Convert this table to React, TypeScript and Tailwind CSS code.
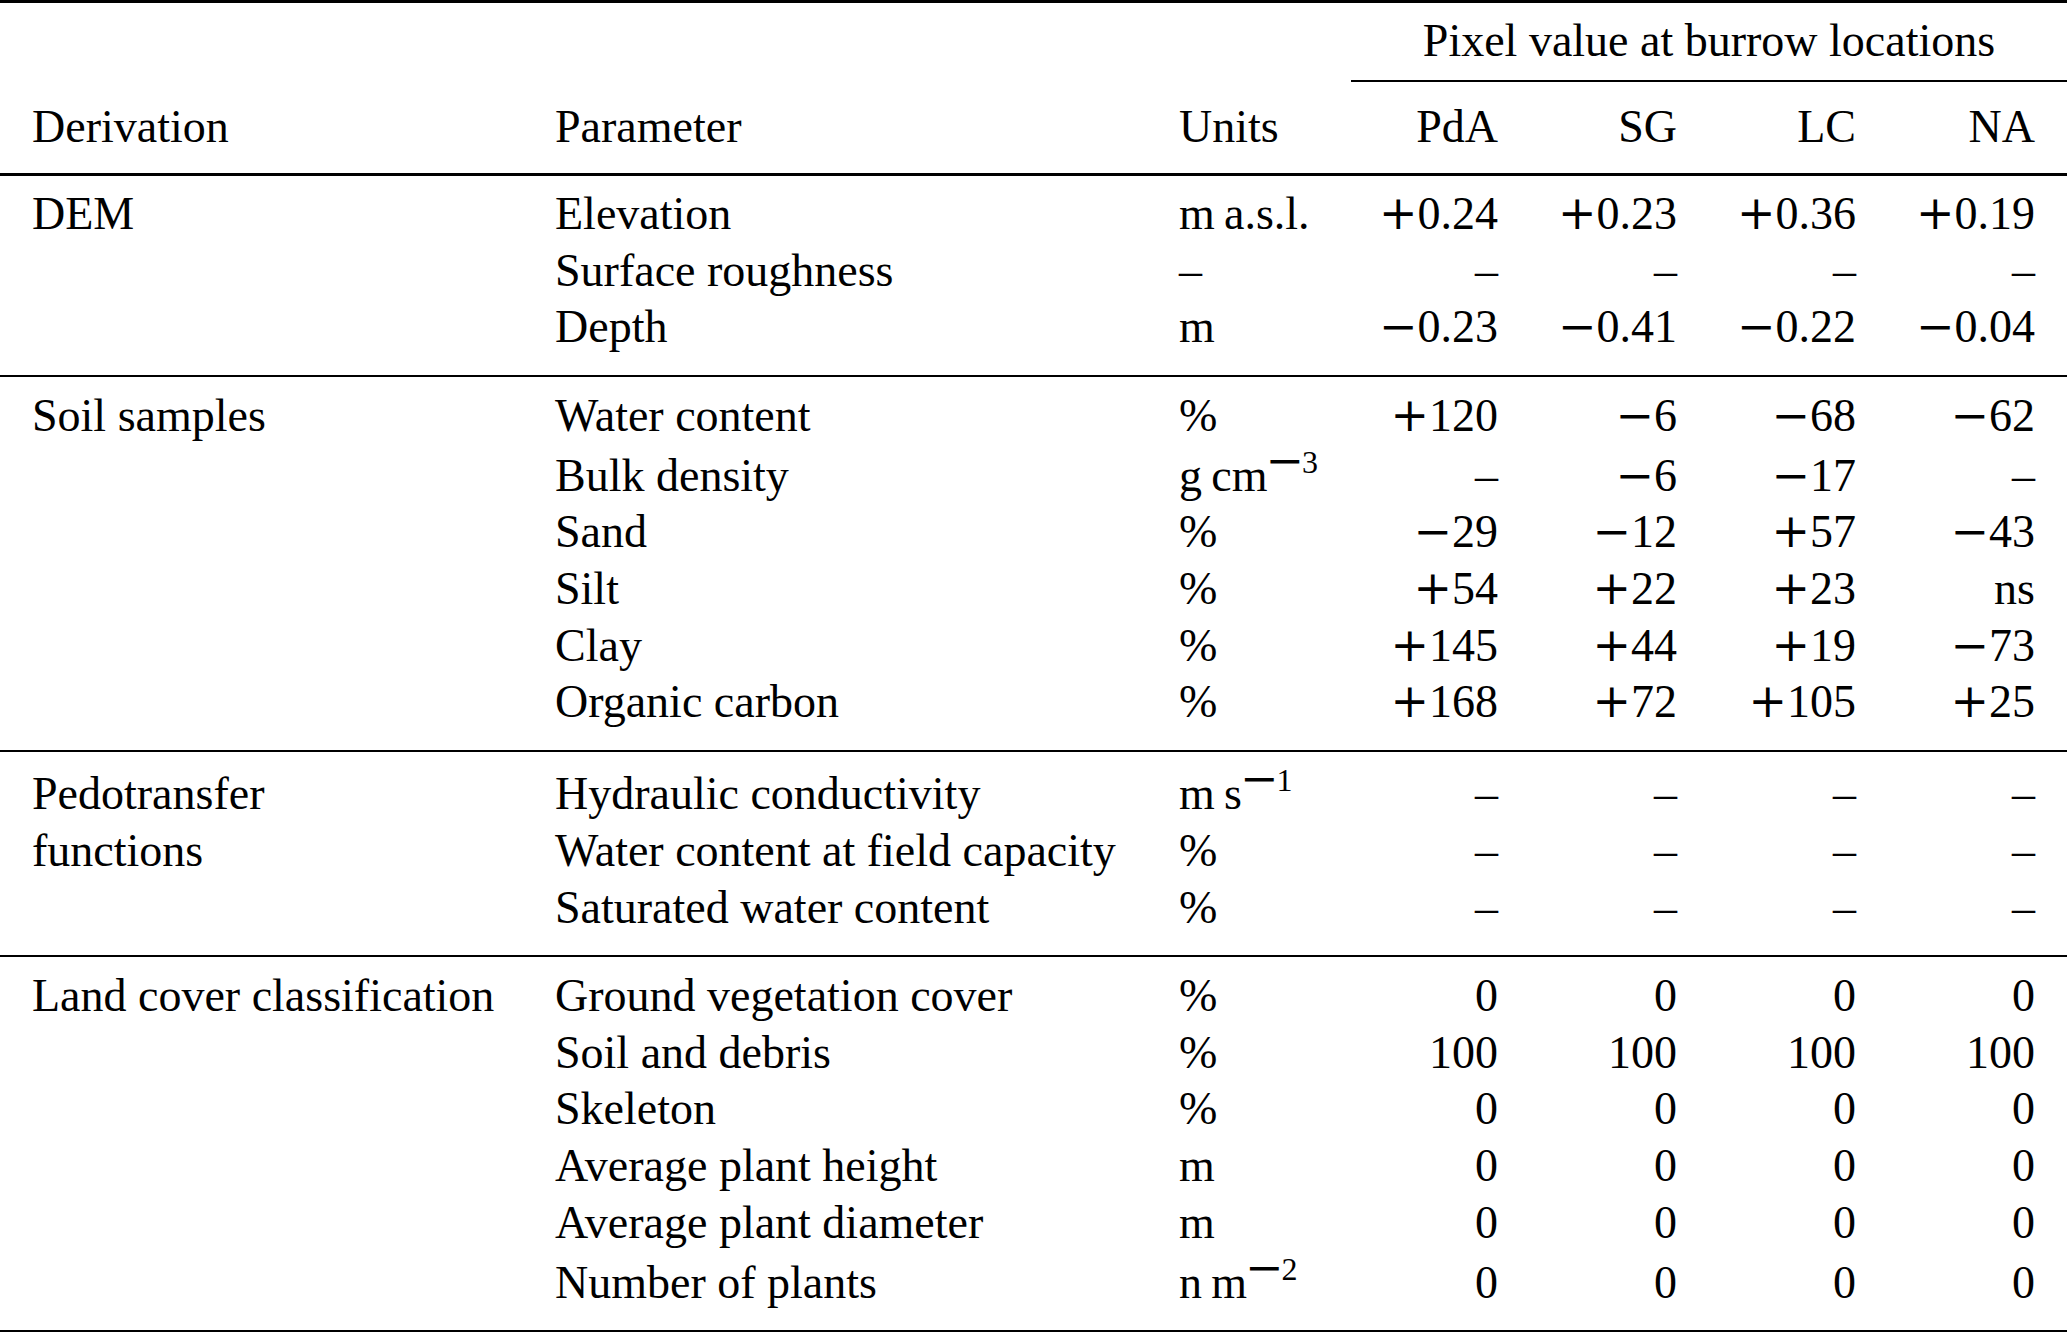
import React from "react";

const COLS =
  "grid grid-cols-[523px_624px_172px_147px_179px_179px_179px] pl-[32px] pr-[32px]";

function Sign({ c }: { c: string }) {
  return <span className="font-['DejaVu_Serif',serif] leading-none">{c}</span>;
}

function Num({ v }: { v: string }) {
  if (v.startsWith("+") || v.startsWith("−")) {
    return (
      <>
        <Sign c={v[0]} />
        {v.slice(1)}
      </>
    );
  }
  return <>{v}</>;
}

function Sup({ n }: { n: string }) {
  return (
    <span className="relative top-[-18px] text-[32px] leading-none">
      <span className="relative top-[3px] ml-[-2px] mr-[-2px] font-['DejaVu_Serif',serif] text-[46px] leading-none">
        −
      </span>
      {n}
    </span>
  );
}

type Row = { p: string; u: React.ReactNode; v: string[]; sup?: boolean };
type Section = { name: string[]; rows: Row[] };

const D = "–";

const sections: Section[] = [
  {
    name: ["DEM"],
    rows: [
      { p: "Elevation", u: "m\u2009a.s.l.", v: ["+0.24", "+0.23", "+0.36", "+0.19"] },
      { p: "Surface roughness", u: D, v: [D, D, D, D] },
      { p: "Depth", u: "m", v: ["−0.23", "−0.41", "−0.22", "−0.04"] },
    ],
  },
  {
    name: ["Soil samples"],
    rows: [
      { p: "Water content", u: "%", v: ["+120", "−6", "−68", "−62"] },
      {
        p: "Bulk density",
        u: (
          <>
            g{"\u2009"}cm
            <Sup n="3" />
          </>
        ),
        v: [D, "−6", "−17", D],
        sup: true,
      },
      { p: "Sand", u: "%", v: ["−29", "−12", "+57", "−43"] },
      { p: "Silt", u: "%", v: ["+54", "+22", "+23", "ns"] },
      { p: "Clay", u: "%", v: ["+145", "+44", "+19", "−73"] },
      { p: "Organic carbon", u: "%", v: ["+168", "+72", "+105", "+25"] },
    ],
  },
  {
    name: ["Pedotransfer", "functions"],
    rows: [
      {
        p: "Hydraulic conductivity",
        u: (
          <>
            m{"\u2009"}s
            <Sup n="1" />
          </>
        ),
        v: [D, D, D, D],
        sup: true,
      },
      { p: "Water content at field capacity", u: "%", v: [D, D, D, D] },
      { p: "Saturated water content", u: "%", v: [D, D, D, D] },
    ],
  },
  {
    name: ["Land cover classification"],
    rows: [
      { p: "Ground vegetation cover", u: "%", v: ["0", "0", "0", "0"] },
      { p: "Soil and debris", u: "%", v: ["100", "100", "100", "100"] },
      { p: "Skeleton", u: "%", v: ["0", "0", "0", "0"] },
      { p: "Average plant height", u: "m", v: ["0", "0", "0", "0"] },
      { p: "Average plant diameter", u: "m", v: ["0", "0", "0", "0"] },
      {
        p: "Number of plants",
        u: (
          <>
            n{"\u2009"}m
            <Sup n="2" />
          </>
        ),
        v: ["0", "0", "0", "0"],
        sup: true,
      },
    ],
  },
];

function SectionBlock({ s }: { s: Section }) {
  return (
    <div className="pt-[10.5px] pb-[18.9px]">
      {s.rows.map((r, i) => (
        <div key={i} className={COLS + (r.sup ? " pt-[3.3px]" : "")}>
          <div className="whitespace-nowrap">{s.name[i] ?? ""}</div>
          <div className="whitespace-nowrap">{r.p}</div>
          <div className="whitespace-nowrap">{r.u}</div>
          {r.v.map((v, j) => (
            <div key={j} className="text-right whitespace-nowrap">
              <Num v={v} />
            </div>
          ))}
        </div>
      ))}
    </div>
  );
}

export default function App() {
  return (
    <div className="w-full min-h-[1332px] bg-white text-black font-['Liberation_Serif',serif] text-[46px] leading-[56.67px]">
      <div className="h-[3px] bg-black" />
      <div className={COLS + " pt-[10.1px]"}>
        <div className="col-start-4 col-span-4 mr-[-32px] text-center whitespace-nowrap">
          Pixel value at burrow locations
        </div>
      </div>
      <div className={COLS + " pt-[10.2px]"}>
        <div className="col-start-4 col-span-4 mr-[-32px] h-[2.33px] bg-black" />
      </div>
      <div className={COLS + " pt-[16.5px] pb-[17.8px]"}>
        <div>Derivation</div>
        <div>Parameter</div>
        <div>Units</div>
        <div className="text-right">PdA</div>
        <div className="text-right">SG</div>
        <div className="text-right">LC</div>
        <div className="text-right">NA</div>
      </div>
      {sections.map((s, i) => (
        <React.Fragment key={i}>
          <div className="h-[2.33px] bg-black" />
          <SectionBlock s={s} />
        </React.Fragment>
      ))}
      <div className="h-[3px] bg-black" />
    </div>
  );
}
